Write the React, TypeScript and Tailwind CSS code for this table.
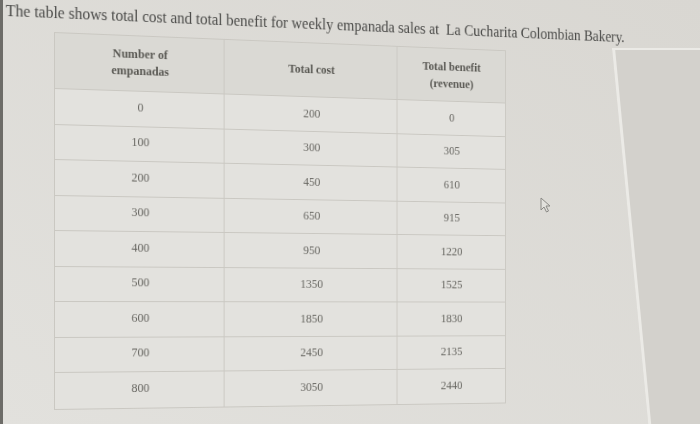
import React from "react";

const rows: [string, string, string][] = [
  ["0", "200", "0"],
  ["100", "300", "305"],
  ["200", "450", "610"],
  ["300", "650", "915"],
  ["400", "950", "1220"],
  ["500", "1350", "1525"],
  ["600", "1850", "1830"],
  ["700", "2450", "2135"],
  ["800", "3050", "2440"],
];

export default function App() {
  return (
    <div
      className="relative w-[700px] h-[424px] overflow-hidden bg-gradient-to-tr from-[#e2e1dd] to-[#d9d7d2] flex"
      style={{ fontFamily: '"Liberation Serif", "Times New Roman", serif' }}
    >
      <div className="w-[3px] bg-[#6d6c68] shrink-0" />

      {/* background window edge */}
      <div className="absolute left-[612px] top-[48px] w-[130px] h-[400px] bg-[#d3d1cc] border-l-[3px] border-t-[2px] border-[#ebeae6] origin-top-left skew-x-[5.5deg]" />

      <div className="relative flex flex-col origin-[51px_310px] [transform:perspective(1500px)_rotateY(12.3deg)]">
        <p className="ml-[2px] pt-[4px] text-[16px] leading-[18px] text-[#4a4a48] whitespace-pre">
          The table shows total cost and total benefit for weekly empanada sales at  La Cucharita Colombian Bakery.
        </p>
        <div className="ml-[51px] mt-[10px] w-[495px] border border-[#cac8c2] bg-[#e3e2de] grid grid-cols-[178px_191px_1fr] text-[#676661] text-[12.5px]">
          <div className="h-[56px] bg-[#dad9d4] border-r border-b border-[#cac8c2] flex items-center justify-center text-center font-bold leading-[17px] pb-[2px] text-[#595853]">
            Number of<br />empanadas
          </div>
          <div className="h-[56px] bg-[#dad9d4] border-r border-b border-[#cac8c2] flex items-center justify-center font-bold text-[#595853]">
            Total cost
          </div>
          <div className="h-[56px] bg-[#dad9d4] border-b border-[#cac8c2] flex items-center justify-center text-center font-bold leading-[18px] text-[#595853]">
            Total benefit<br />(revenue)
          </div>
          {rows.map((r, i) => (
            <React.Fragment key={i}>
              <div
                className={`h-[35.5px] border-r border-[#cac8c2] flex items-center justify-center pb-[2px] ${
                  i < rows.length - 1 ? "border-b" : ""
                }`}
              >
                {r[0]}
              </div>
              <div
                className={`h-[35.5px] border-r border-[#cac8c2] flex items-center justify-center ${
                  i < rows.length - 1 ? "border-b" : ""
                }`}
              >
                {r[1]}
              </div>
              <div
                className={`h-[35.5px] border-[#cac8c2] flex items-center justify-center ${
                  i < rows.length - 1 ? "border-b" : ""
                }`}
              >
                {r[2]}
              </div>
            </React.Fragment>
          ))}
        </div>
      </div>

      {/* mouse cursor */}
      <svg
        className="absolute left-[540px] top-[197px]"
        width="12"
        height="17"
        viewBox="0 0 12 17"
      >
        <path
          d="M1 1 L1 13 L4 10 L6.5 15 L8.5 14 L6 9 L10 9 Z"
          fill="#e2e1dd"
          stroke="#8a8985"
          strokeWidth="1"
          strokeLinejoin="round"
        />
      </svg>
    </div>
  );
}
